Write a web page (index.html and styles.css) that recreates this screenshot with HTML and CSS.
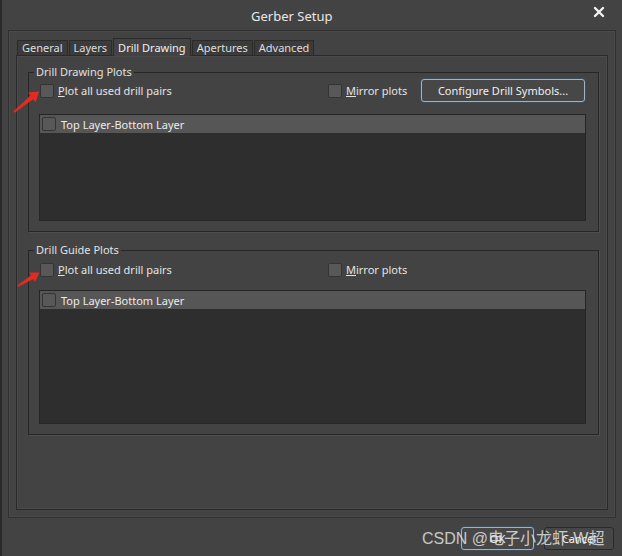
FILE: index.html
```html
<!DOCTYPE html>
<html lang="en">
<head>
    <meta charset="UTF-8">
    <title>Gerber Setup</title>
    <link rel="stylesheet" href="styles.css">
</head>
<body>
    <div class="window">
        <div class="titlebar">
            <span class="title">Gerber Setup</span>
            <svg class="close" width="12" height="12" viewBox="0 0 12 12">
                <path d="M2 2 L10 10 M10 2 L2 10" stroke="#f2f2f2" stroke-width="2.4" stroke-linecap="round"/>
            </svg>
        </div>

        <div class="frame">
            <div class="tabs">
                <span class="tab">General</span>
                <span class="tab">Layers</span>
                <span class="tab active">Drill Drawing</span>
                <span class="tab">Apertures</span>
                <span class="tab">Advanced</span>
            </div>
            <div class="pane">
                <fieldset class="group">
                    <legend>Drill Drawing Plots</legend>
                    <div class="options">
                        <label class="check"><span class="box"></span><span><u>P</u>lot all used drill pairs</span></label>
                        <label class="check"><span class="box"></span><span><u>M</u>irror plots</span></label>
                        <button type="button" class="btn focus">Configure Drill Symbols...</button>
                    </div>
                    <div class="list">
                        <div class="list-head"><span class="box"></span>Top Layer-Bottom Layer</div>
                        <div class="list-body"></div>
                    </div>
                </fieldset>

                <fieldset class="group guide">
                    <legend>Drill Guide Plots</legend>
                    <div class="options">
                        <label class="check"><span class="box"></span><span><u>P</u>lot all used drill pairs</span></label>
                        <label class="check"><span class="box"></span><span><u>M</u>irror plots</span></label>
                    </div>
                    <div class="list">
                        <div class="list-head"><span class="box"></span>Top Layer-Bottom Layer</div>
                        <div class="list-body"></div>
                    </div>
                </fieldset>
            </div>
        </div>

        <div class="footer">
            <button type="button" class="btn focus ok">OK</button>
            <button type="button" class="btn cancel">Cancel</button>
        </div>

        <!-- annotations over the screenshot -->
        <div class="watermark">CSDN @电子小龙虾-W超</div>
        <svg class="arrows" width="622" height="556" viewBox="0 0 622 556">
            <polygon fill="#e32b22" points="11.4,111.2 28.5,95.6 26,92.5 37,91.5 33.8,102.3 31.2,99.2 12.6,112.8"/>
            <polygon fill="#e32b22" points="15.5,285.3 29.2,275.3 27.4,272.4 37.5,272.5 33,282 31.2,279 16.5,286.7"/>
        </svg>
    </div>
</body>
</html>
```

FILE: styles.css
```css
body {
    margin: 0;
    background-color: #434343;
    font-family: "Noto Sans", "Liberation Sans", sans-serif;
    font-size: 11px;
    color: #e4e4e4;
}
.window {
    position: relative;
    width: 622px;
    height: 556px;
    box-sizing: border-box;
    background-color: #434343;
    border-left: 2px solid #2a2a2a;
    overflow: hidden;
}
.titlebar {
    height: 30px;
    display: flex;
    align-items: center;
}
.title {
    margin-left: 249px;
    font-size: 13px;
    color: #e8e8e8;
    padding-top: 2px;
}
.close {
    margin-left: auto;
    margin-right: 17px;
    margin-top: -6px;
}
.frame {
    margin: 0 6px;
    height: 488px;
    box-sizing: border-box;
    border: 1px solid #303030;
    box-shadow: inset 0 0 0 1px #4a4a4a;
    padding: 9px 7px 7px 7px;
}
.tabs {
    display: flex;
    gap: 1px;
    height: 15px;
    padding-left: 1px;
}
.tab {
    height: 15px;
    line-height: 14px;
    padding: 0 4px;
    box-sizing: border-box;
    background-color: #3b3b3b;
    border: 1px solid #2b2b2b;
    border-bottom: none;
    color: #dedede;
}
.tab.active {
    height: 18px;
    margin-top: -2px;
    line-height: 17px;
    background-color: #434343;
    border-color: #2a2a2a;
    color: #f0f0f0;
    position: relative;
    z-index: 1;
}
.pane {
    height: 455px;
    box-sizing: border-box;
    border: 1px solid #2a2a2a;
    box-shadow: inset 0 0 0 1px #4b4b4b;
    padding: 9px 8px 0 11px;
}
.group {
    margin: 0;
    border: 1px solid #262626;
    box-shadow: 1px 1px 0 #4e4e4e;
    padding: 0 12px 10px 10px;
}
.group.guide {
    margin-top: 11px;
}
.group legend {
    margin-left: -5px;
    padding: 0 2px;
    line-height: 14px;
    color: #e0e0e0;
}
.options {
    display: grid;
    grid-template-columns: 288px 94px 164px;
    align-items: center;
    height: 23px;
}
.guide .options {
    margin-top: 1px;
}
.check {
    display: flex;
    align-items: center;
    gap: 4px;
    padding-left: 1px;
}
.box {
    width: 14px;
    height: 14px;
    box-sizing: border-box;
    background-color: #585858;
    border: 1px solid #343434;
    border-radius: 2px;
    flex-shrink: 0;
}
.btn {
    font-family: inherit;
    font-size: 11px;
    color: #f0f0f0;
    background-color: #474747;
    border: 1px solid #2c2c2c;
    border-radius: 3px;
    height: 23px;
    padding: 0;
}
.btn.focus {
    border-color: #9fb3c4;
    box-shadow: 0 0 0 1px #3d4d5a;
}
.list {
    margin-top: 12px;
    border: 1px solid #262626;
    background-color: #2e2e2e;
}
.guide .list {
    margin-top: 9px;
}
.list-head {
    height: 18px;
    display: flex;
    align-items: center;
    gap: 5px;
    padding-left: 2px;
    background-color: #565656;
    color: #ececec;
}
.list-body {
    height: 87px;
}
.guide .list-body {
    height: 114px;
}
.footer {
    display: flex;
    justify-content: flex-end;
    gap: 10px;
    padding: 9px 8px 0 0;
}
.ok {
    width: 73px;
}
.cancel {
    width: 70px;
    border-color: #2a2a2a;
}
.watermark {
    position: absolute;
    left: 420px;
    top: 525px;
    font-family: "Liberation Sans", "Noto Sans CJK SC", sans-serif;
    font-size: 16px;
    color: rgba(235, 235, 235, 0.8);
    white-space: nowrap;
}
.arrows {
    position: absolute;
    left: 0;
    top: 0;
    pointer-events: none;
}
```
